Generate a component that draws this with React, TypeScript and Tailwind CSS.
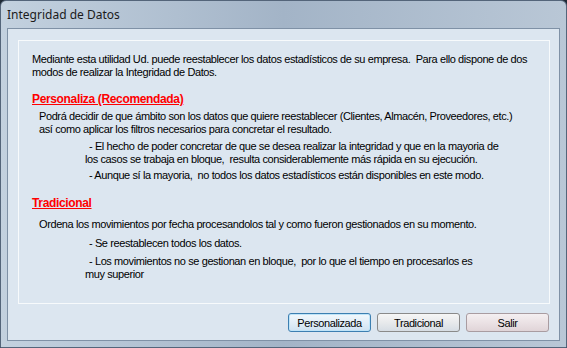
import React from "react";

const body = "font-['Liberation_Sans',Arial,sans-serif] text-[11px] leading-[13px] tracking-[-0.4px] text-black";

function Heading({ children, className = "" }: { children: React.ReactNode; className?: string }) {
  return (
    <div className={`font-['Liberation_Sans',Arial,sans-serif] text-[12px] leading-[13px] tracking-[-0.35px] font-bold text-[#ff0000] underline ${className}`}>
      {children}
    </div>
  );
}

function Btn({ label, kind }: { label: string; kind: "default" | "normal" | "exit" }) {
  const styles = {
    default: "border-[#3c7fb1] bg-gradient-to-b from-[#f2f8fc] via-[#e2eef8] to-[#cfe2f1] shadow-[inset_0_0_0_1px_#bfe4f8]",
    normal: "border-[#8a8a8a] bg-gradient-to-b from-[#f6f6f6] via-[#e8eaec] to-[#d6dde4]",
    exit: "border-[#a99ca1] bg-gradient-to-b from-[#f4eff1] via-[#ebe2e5] to-[#e0d4d8]",
  }[kind];
  return (
    <button
      className={`w-[83px] h-[19px] rounded-[3px] border ${styles} ${body} leading-[16px] text-center`}
    >
      {label}
    </button>
  );
}

export default function App() {
  return (
    <div className="w-[567px] h-[348px] bg-[#1f2a36] overflow-hidden">
      <div className="w-full h-full rounded-t-[6px] border border-[#54657a] bg-gradient-to-r from-[#c3d1df] via-[#a3b4c7] to-[#b9c7d6] flex flex-col">
        <div className="h-[27px] flex items-center pl-[6px] font-['Noto_Sans',sans-serif] text-[12px] text-[#1b1b1b]">
          Integridad de Datos
        </div>
        <div className="flex-1 mx-[6px] mb-[6px] border border-[#7f91a6] bg-[#dce6f0] flex flex-col">
          <div className="mt-[11px] ml-[10px] mr-[9px] h-[264px] border border-[#f7fafc] pl-[13px] pt-[12px]">
            <div className={`${body} whitespace-nowrap`}>
              Mediante esta utilidad Ud. puede reestablecer los datos estadísticos de su empresa.&nbsp; Para ello dispone de dos
              <br />
              modos de realizar la Integridad de Datos.
            </div>
            <Heading className="mt-[14px]">Personaliza (Recomendada)</Heading>
            <div className={`${body} whitespace-nowrap mt-[4px] pl-[7px]`}>
              Podrá decidir de que ámbito son los datos que quiere reestablecer (Clientes, Almacén, Proveedores, etc.)
              <br />
              así como aplicar los filtros necesarios para concretar el resultado.
            </div>
            <div className={`${body} whitespace-nowrap mt-[4px] pl-[53px]`}>
              <span className="pl-[4px]">- El hecho de poder concretar de que se desea realizar la integridad y que en la mayoria de</span>
              <br />
              los casos se trabaja en bloque,&nbsp; resulta considerablemente más rápida en su ejecución.
            </div>
            <div className={`${body} whitespace-nowrap mt-[3px] pl-[57px]`}>
              - Aunque sí la mayoria,&nbsp; no todos los datos estadísticos están disponibles en este modo.
            </div>
            <Heading className="mt-[15px]">Tradicional</Heading>
            <div className={`${body} whitespace-nowrap mt-[8px] pl-[7px]`}>
              Ordena los movimientos por fecha procesandolos tal y como fueron gestionados en su momento.
            </div>
            <div className={`${body} whitespace-nowrap mt-[6px] pl-[57px]`}>
              - Se reestablecen todos los datos.
            </div>
            <div className={`${body} whitespace-nowrap mt-[5px] pl-[53px] leading-[12px]`}>
              <span className="pl-[4px]">- Los movimientos no se gestionan en bloque,&nbsp; por lo que el tiempo en procesarlos es</span>
              <br />
              muy superior
            </div>
          </div>
          <div className="flex justify-end gap-[6px] mr-[10px] mt-[9px]">
            <Btn label="Personalizada" kind="default" />
            <Btn label="Tradicional" kind="normal" />
            <Btn label="Salir" kind="exit" />
          </div>
        </div>
      </div>
    </div>
  );
}
